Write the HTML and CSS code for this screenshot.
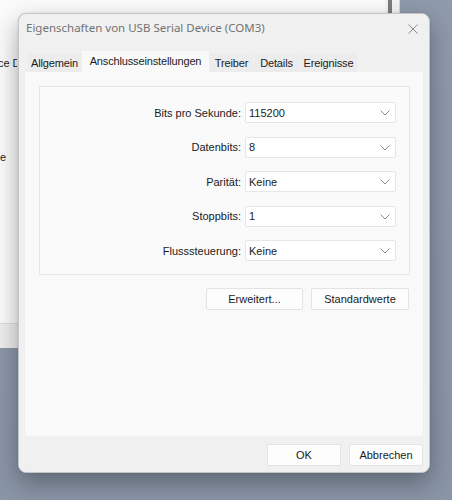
FILE: index.html
```html
<!DOCTYPE html>
<html lang="de">
<head>
<meta charset="utf-8">
<title>Eigenschaften von USB Serial Device (COM3)</title>
<link rel="stylesheet" href="styles.css">
</head>
<body>
<div class="desktop">
  <div class="bgwin">
    <div class="bgwin-body">
      <div class="bgwin-main">
        <div class="bg-clip">
          <div class="bg-line bg-line-1">vice D</div>
          <div class="bg-line bg-line-2">ne</div>
        </div>
      </div>
      <div class="bg-scroll"><div class="bg-thumb"></div></div>
    </div>
    <div class="bgwin-foot"></div>
  </div>

  <div class="dialog">
    <div class="titlebar">
      <span class="title">Eigenschaften von USB Serial Device (COM3)</span>
      <svg class="close" width="10" height="10" viewBox="0 0 10 10"><path d="M0.5 0.5L9.5 9.5M9.5 0.5L0.5 9.5" stroke="#8a8a8a" stroke-width="1" fill="none"/></svg>
    </div>
    <div class="tabs">
      <div class="tab w1">Allgemein</div>
      <div class="tab tab-active w2">Anschlusseinstellungen</div>
      <div class="tab w3">Treiber</div>
      <div class="tab w4">Details</div>
      <div class="tab w5">Ereignisse</div>
    </div>
    <div class="panel">
      <div class="group">
        <div class="row"><span class="label">Bits pro Sekunde:</span><div class="select"><span>115200</span><svg class="chev" width="10" height="6" viewBox="0 0 10 6"><path d="M0.5 0.5L5 5L9.5 0.5" stroke="#8c8c8c" fill="none"/></svg></div></div>
        <div class="row"><span class="label">Datenbits:</span><div class="select"><span>8</span><svg class="chev" width="10" height="6" viewBox="0 0 10 6"><path d="M0.5 0.5L5 5L9.5 0.5" stroke="#8c8c8c" fill="none"/></svg></div></div>
        <div class="row"><span class="label">Parität:</span><div class="select"><span>Keine</span><svg class="chev" width="10" height="6" viewBox="0 0 10 6"><path d="M0.5 0.5L5 5L9.5 0.5" stroke="#8c8c8c" fill="none"/></svg></div></div>
        <div class="row"><span class="label">Stoppbits:</span><div class="select"><span>1</span><svg class="chev" width="10" height="6" viewBox="0 0 10 6"><path d="M0.5 0.5L5 5L9.5 0.5" stroke="#8c8c8c" fill="none"/></svg></div></div>
        <div class="row"><span class="label">Flusssteuerung:</span><div class="select"><span>Keine</span><svg class="chev" width="10" height="6" viewBox="0 0 10 6"><path d="M0.5 0.5L5 5L9.5 0.5" stroke="#8c8c8c" fill="none"/></svg></div></div>
      </div>
      <div class="actions">
        <div class="btn btn-ext">Erweitert...</div>
        <div class="btn btn-std">Standardwerte</div>
      </div>
    </div>
    <div class="footer">
      <div class="btn btn-foot">OK</div>
      <div class="btn btn-foot">Abbrechen</div>
    </div>
  </div>
</div>
</body>
</html>
```
FILE: styles.css
```css
* { box-sizing: border-box; }
html, body { margin: 0; padding: 0; }
body {
  width: 452px;
  height: 500px;
  overflow: hidden;
  background: #8d98a9;
  font-family: "Liberation Sans", Arial, sans-serif;
  font-size: 11px;
  color: #1b1b1b;
}
.desktop {
  position: relative;
  width: 452px;
  height: 500px;
  background: linear-gradient(180deg, #8f9aab 0%, #8a95a6 100%);
}

/* window behind */
.bgwin {
  position: absolute;
  left: 0;
  top: 0;
  width: 400px;
  height: 348px;
  display: flex;
  flex-direction: column;
  background: #fbfbfb;
  border-right: 1px solid #d6d6d6;
}
.bgwin-body { flex: 1; display: flex; }
.bgwin-main { flex: 1; padding-top: 56px; }
.bg-clip { width: 17px; overflow: hidden; }
.bg-line { white-space: nowrap; line-height: 14px; color: #1b1b1b; }
.bg-line-1 { margin-left: -10px; }
.bg-line-2 { margin-left: -6px; margin-top: 80px; }
.bg-scroll { width: 14px; display: flex; padding-left: 2px; background: #f3f3f3; }
.bg-thumb { width: 4px; height: 40px; background: #7b7b7b; margin-left: 1px; }
.bgwin-foot {
  height: 25px;
  background: #eeeeee;
  border-top: 1px solid #dedede;
}

/* dialog */
.dialog {
  position: absolute;
  left: 18px;
  top: 13px;
  width: 412px;
  height: 460px;
  background: #f0f0f0;
  border: 1px solid #c4c6ca;
  border-radius: 8px;
  box-shadow: 0 10px 24px rgba(20, 25, 35, 0.38), 0 0 2px rgba(0, 0, 0, 0.15);
  display: flex;
  flex-direction: column;
}
.titlebar {
  height: 37px;
  display: flex;
  align-items: center;
  justify-content: space-between;
  padding: 0 11px 0 7px;
}
.title {
  font-family: "Noto Sans", "Open Sans", sans-serif;
  font-size: 11.5px;
  color: #727272;
  position: relative;
  top: -5px;
}
.close { position: relative; top: -4px; }

.tabs {
  height: 21px;
  display: flex;
  align-items: flex-end;
  gap: 1px;
  padding-left: 9px;
}
.tab {
  height: 19px;
  display: flex;
  align-items: center;
  justify-content: center;
  background: #ececec;
  letter-spacing: -0.15px;
  white-space: nowrap;
}
.tab-active { height: 21px; background: #f9f9f9; padding-bottom: 2px; }
.w1 { width: 53px; }
.w2 { width: 127px; }
.w3 { width: 43px; }
.w4 { width: 45px; }
.w5 { width: 57px; }

.panel {
  margin: 0 6px;
  height: 364px;
  background: #f9f9f9;
  padding: 14px 13px 0 14px;
}
.group {
  height: 189px;
  border: 1px solid #e6e6e6;
  background: #fafafa;
  padding-top: 15px;
  display: flex;
  flex-direction: column;
  gap: 13.5px;
}
.row {
  height: 21px;
  display: flex;
  align-items: center;
  gap: 4px;
}
.label {
  width: 201px;
  text-align: right;
}
.select {
  width: 151px;
  height: 21px;
  background: #ffffff;
  border: 1px solid #e6e6e6;
  border-radius: 2px;
  display: flex;
  align-items: center;
  justify-content: space-between;
  padding: 0 5px 0 3px;
}
.chev { margin-top: 1px; }

.actions {
  margin-top: 13px;
  display: flex;
  justify-content: flex-end;
  gap: 8px;
  padding-right: 1px;
}
.btn {
  height: 22px;
  background: #fdfdfd;
  border: 1px solid #e3e3e3;
  border-radius: 2px;
  display: flex;
  align-items: center;
  justify-content: center;
}
.btn-ext { width: 97px; }
.btn-std { width: 98px; }

.footer {
  display: flex;
  justify-content: flex-end;
  gap: 8px;
  padding: 8px 6px 0 0;
}
.btn-foot { width: 74px; }
```
